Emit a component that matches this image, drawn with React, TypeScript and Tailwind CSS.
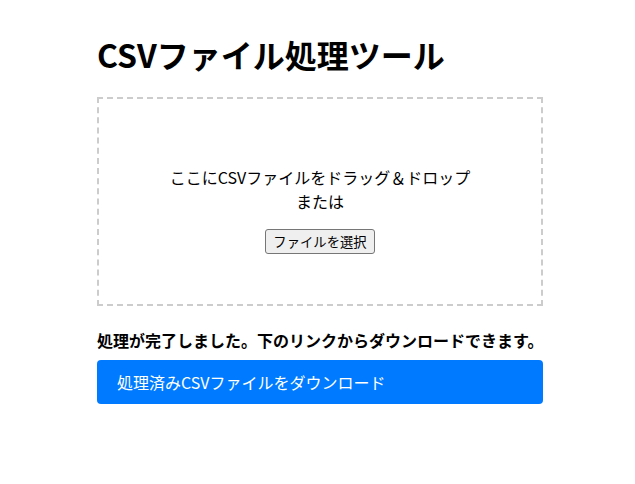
import React from 'react';

const font = { fontFamily: '"Noto Sans CJK JP", "Noto Sans", sans-serif' };

export default function App() {
  return (
    <div className="min-h-screen bg-white text-black" style={font}>
      <div className="ml-[97px] w-[446px] pt-[30px]">
        <h1 className="text-[32px] font-bold leading-[48px] mb-[19px]">CSVファイル処理ツール</h1>

        <div className="h-[209px] border-2 border-dashed border-[#cccccc] flex flex-col items-center justify-center text-center">
          <p className="my-[16px] text-base leading-[24px]">
            ここにCSVファイルをドラッグ＆ドロップ
            <br />
            または
          </p>
          <button className="h-[25px] px-[7px] text-[13.33px] leading-[19px] bg-[#efefef] border border-[#767676] rounded-[3px]">
            ファイルを選択
          </button>
        </div>

        <p className="mt-[22px] text-base font-bold leading-[24px] whitespace-nowrap">
          処理が完了しました。下のリンクからダウンロードできます。
        </p>
        <a
          href="#"
          className="mt-[8px] flex items-center h-[44px] px-[20px] bg-[#007bff] text-white text-base rounded-[4px]"
        >
          処理済みCSVファイルをダウンロード
        </a>
      </div>
    </div>
  );
}
